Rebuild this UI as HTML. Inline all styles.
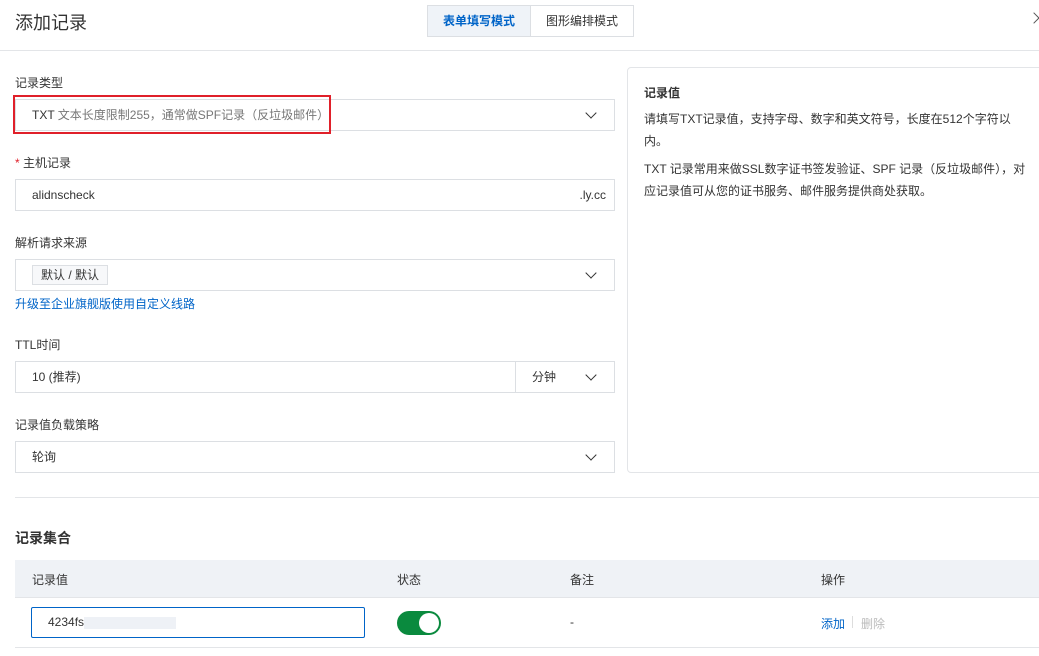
<!DOCTYPE html>
<html><head><meta charset="utf-8"><style>
*{box-sizing:border-box;margin:0;padding:0}
body{width:1039px;height:656px;overflow:hidden;background:#fff;font-family:"Liberation Sans","Noto Sans CJK SC",sans-serif;color:#333;font-size:12px;position:relative}
.a{position:absolute}
.lbl{position:absolute;left:15px;font-size:12px;color:#333}
.box{position:absolute;border:1px solid #dcdfe3;background:#fff;height:32px;line-height:30px;padding-left:16px;font-size:12px;color:#333}
.chev{position:absolute;width:8px;height:8px;border-right:1.3px solid #333;border-bottom:1.3px solid #333;transform:rotate(45deg)}
</style></head><body>
<div class="a" style="left:15px;top:9px;font-size:18px;color:#333">添加记录</div>
<div class="a" style="left:427px;top:5px;width:207px;height:32px;border:1px solid #dcdfe3;display:flex">
 <div style="width:103px;background:#eff3f8;color:#0064c8;font-weight:bold;text-align:center;line-height:30px;border-right:1px solid #dcdfe3">表单填写模式</div>
 <div style="flex:1;text-align:center;line-height:30px;color:#333">图形编排模式</div>
</div>
<div class="a" style="left:1030px;top:14px;width:8px;height:8px;border-right:1.3px solid #555;border-top:1.3px solid #555;transform:rotate(45deg)"></div>
<div class="a" style="left:0;top:50px;width:1039px;height:1px;background:#e3e5e8"></div>

<div class="lbl" style="top:74px">记录类型</div>
<div class="box" style="left:15px;top:99px;width:600px">TXT <span style="color:#777">文本长度限制255，通常做SPF记录（反垃圾邮件）</span></div>
<div class="chev" style="left:587px;top:109px"></div>
<div class="a" style="left:13px;top:95px;width:318px;height:39px;border:2px solid #e0202a"></div>

<div class="lbl" style="top:154px"><span style="color:#e0202a">*</span> 主机记录</div>
<div class="box" style="left:15px;top:179px;width:600px">alidnscheck<span style="position:absolute;right:8px;color:#333">.ly.cc</span></div>

<div class="lbl" style="top:234px">解析请求来源</div>
<div class="box" style="left:15px;top:259px;width:600px"><span style="display:inline-block;border:1px solid #dcdfe3;background:#f7f8fa;line-height:18px;padding:0 8px;margin-top:5px;vertical-align:top">默认 / 默认</span></div>
<div class="chev" style="left:587px;top:269px"></div>
<div class="a" style="left:15px;top:295px;color:#0064c8">升级至企业旗舰版使用自定义线路</div>

<div class="lbl" style="top:336px">TTL时间</div>
<div class="box" style="left:15px;top:361px;width:501px">10 (推荐)</div>
<div class="box" style="left:515px;top:361px;width:100px">分钟</div>
<div class="chev" style="left:587px;top:371px"></div>

<div class="lbl" style="top:416px">记录值负载策略</div>
<div class="box" style="left:15px;top:441px;width:600px">轮询</div>
<div class="chev" style="left:587px;top:451px"></div>

<div class="a" style="left:627px;top:67px;width:420px;height:406px;border:1px solid #e3e5e8;border-radius:4px;padding:16px 16px;line-height:22px;color:#333">
 <div style="font-weight:bold;margin-bottom:6px;line-height:18px">记录值</div>
 <div style="width:380px">请填写TXT记录值，支持字母、数字和英文符号，长度在512个字符以内。</div>
 <div style="width:385px;margin-top:6px">TXT 记录常用来做SSL数字证书签发验证、SPF 记录（反垃圾邮件），对应记录值可从您的证书服务、邮件服务提供商处获取。</div>
</div>

<div class="a" style="left:15px;top:497px;width:1024px;height:1px;background:#e3e5e8"></div>
<div class="a" style="left:15px;top:528px;font-size:14px;font-weight:bold">记录集合</div>

<div class="a" style="left:15px;top:560px;width:1024px;height:38px;background:#eff2f6;border-bottom:1px solid #e3e5e8"></div>
<div class="a" style="left:32px;top:571px">记录值</div>
<div class="a" style="left:397px;top:571px">状态</div>
<div class="a" style="left:570px;top:571px">备注</div>
<div class="a" style="left:821px;top:571px">操作</div>
<div class="a" style="left:31px;top:607px;width:334px;height:31px;border:1px solid #0064c8;border-radius:2px;padding-left:16px;line-height:29px">4234fs<span style="display:inline-block;width:92px;height:12px;background:#eef1f6;vertical-align:middle"></span></div>
<div class="a" style="left:397px;top:611px;width:44px;height:24px;border-radius:12px;background:#0a8a3e"><div style="position:absolute;right:2px;top:2px;width:20px;height:20px;border-radius:50%;background:#fff"></div></div>
<div class="a" style="left:570px;top:615px">-</div>
<div class="a" style="left:821px;top:615px;color:#0064c8">添加</div>
<div class="a" style="left:852px;top:616px;width:1px;height:12px;background:#ddd"></div>
<div class="a" style="left:861px;top:615px;color:#bbb">删除</div>
<div class="a" style="left:15px;top:647px;width:1024px;height:1px;background:#e3e5e8"></div>
</body></html>
